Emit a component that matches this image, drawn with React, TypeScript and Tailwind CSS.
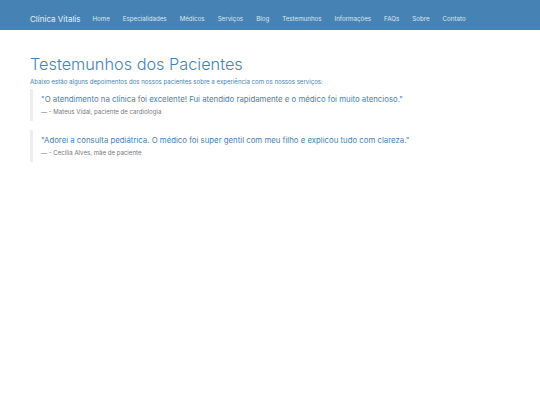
const links = ['Home', 'Especialidades', 'Médicos', 'Serviços', 'Blog', 'Testemunhos', 'Informações', 'FAQs', 'Sobre', 'Contato']

const testimonials = [
  {
    quote: '"O atendimento na clínica foi excelente! Fui atendido rapidamente e o médico foi muito atencioso."',
    author: '- Mateus Vidal, paciente de cardiologia',
  },
  {
    quote: '"Adorei a consulta pediátrica. O médico foi super gentil com meu filho e explicou tudo com clareza."',
    author: '- Cecília Alves, mãe de paciente',
  },
]

export default function App() {
  return (
    <div className="min-h-[405px] bg-white" style={{ fontFamily: 'Inter, "Open Sans", sans-serif' }}>
      <nav className="h-[30px] bg-[#4682b4] flex items-start pt-[14px] px-[30px]">
        <span className="text-[8px] leading-[10px] text-[#e8eef5] mr-[12px]">Clínica Vitalis</span>
        <div className="flex items-center gap-[13px] h-[10px]">
          {links.map((l) => (
            <a key={l} className="text-[6.2px] leading-[10px] text-[#dde7f0]">
              {l}
            </a>
          ))}
        </div>
      </nav>

      <main className="px-[30px] pt-[24px]">
        <h1 className="text-[16.3px] font-light text-[#4682b4] leading-[20px]">Testemunhos dos Pacientes</h1>
        <p className="text-[6.1px] text-[#4682b4] mt-[4px] leading-[8px]">
          Abaixo estão alguns depoimentos dos nossos pacientes sobre a experiência com os nossos serviços:
        </p>

        <div className="mt-[3px]">
          {testimonials.map((t) => (
            <blockquote key={t.author} className="border-l-[3px] border-[#eeeeee] pl-[8px] py-[5px] mb-[9px]">
              <p className="text-[7.8px] text-[#4682b4] leading-[11px]">{t.quote}</p>
              <footer className="text-[6.1px] text-[#777777] mt-[3px] leading-[8px]">— {t.author}</footer>
            </blockquote>
          ))}
        </div>
      </main>
    </div>
  )
}
